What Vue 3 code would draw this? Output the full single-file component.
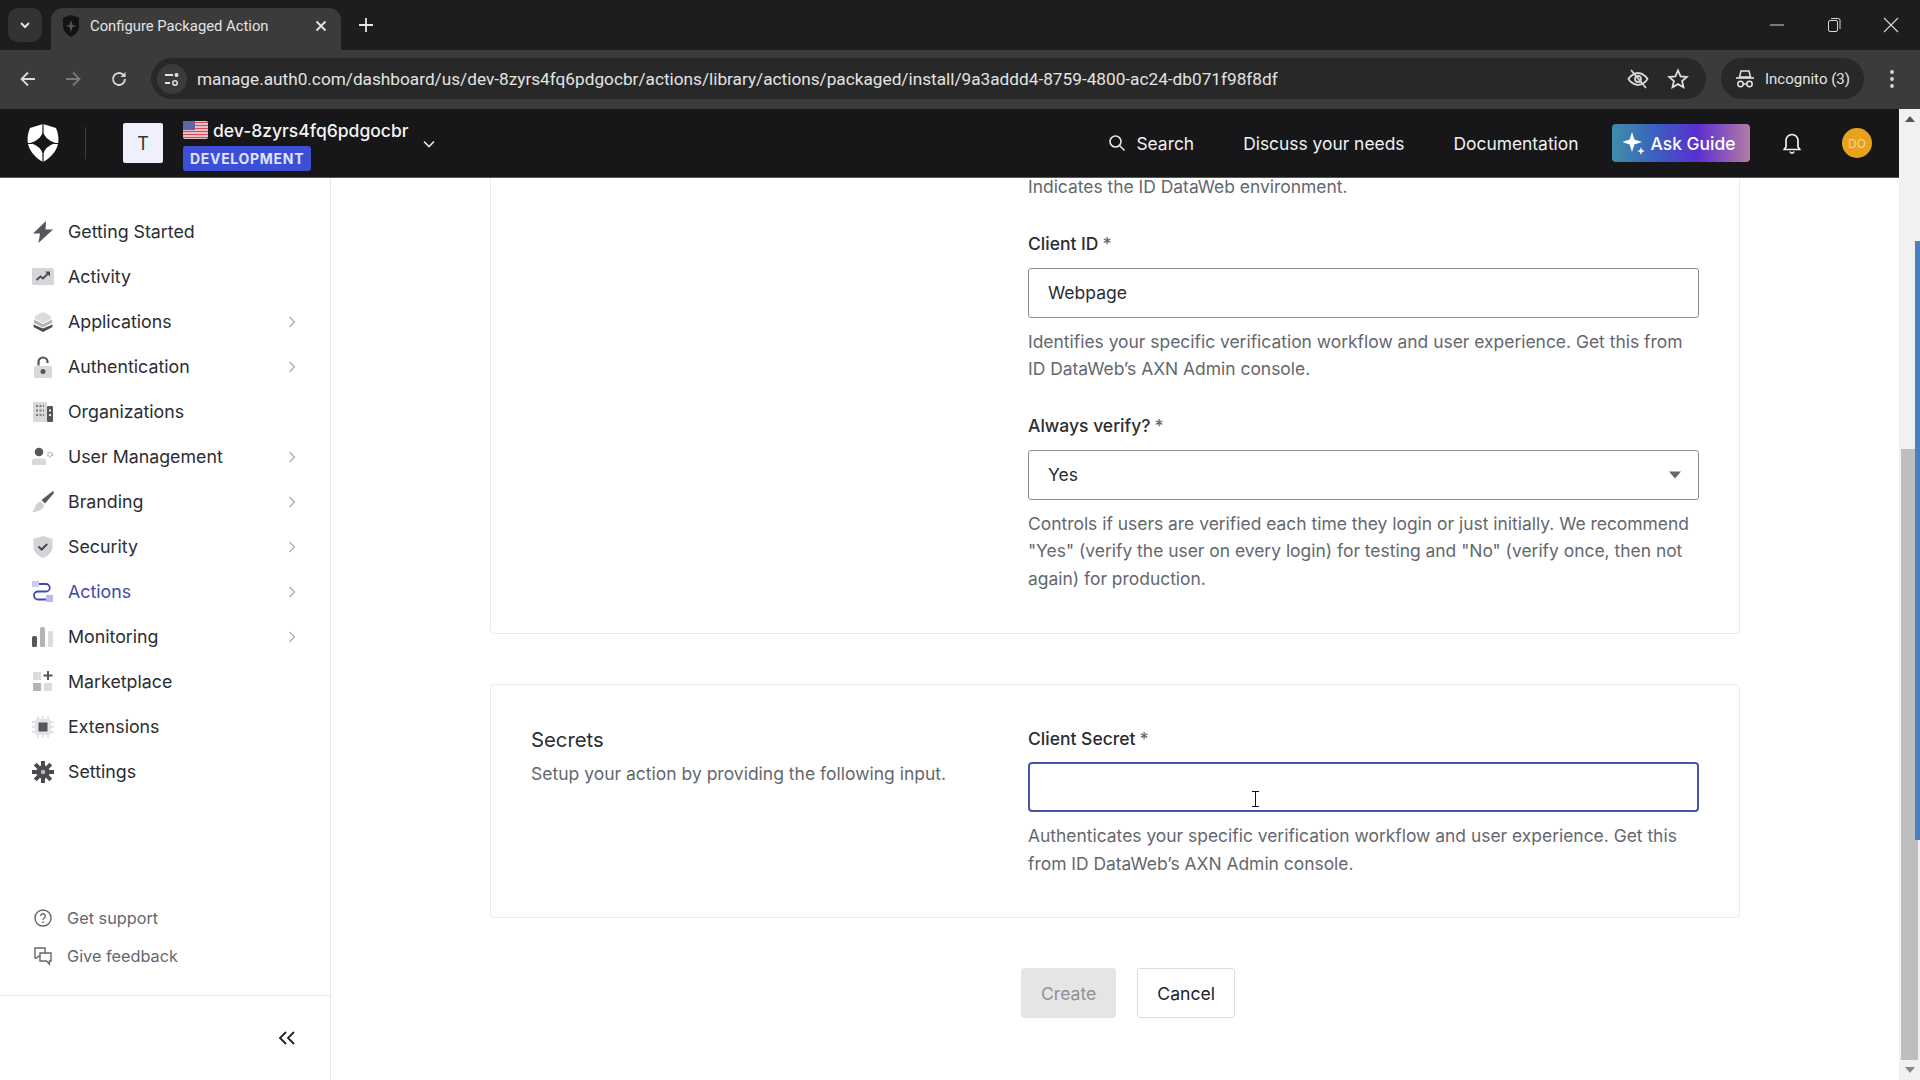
<template>
  <div class="screen">
    <div class="tabstrip">
      <button class="tab-search">
        <svg width="14" height="14" viewBox="0 0 14 14"><path d="M3 5l4 4 4-4" fill="none" stroke="#e3e3e3" stroke-width="2"/></svg>
      </button>
      <div class="tab">
        <svg class="favicon" width="20" height="24" viewBox="0 0 20 24"><path d="M10 1L2 3.500V12c0 5 3.500 8.500 8 11 4.500-2.500 8-6 8-11V3.500z" fill="#131315"/><path d="M10 6l1.500 5 4 1-4 1-1.500 5-1.500-5-4-1 4-1z" fill="#555"/></svg>
        <span class="tab-title">Configure Packaged Action</span>
        <svg class="tab-close" width="14" height="14" viewBox="0 0 14 14"><path d="M2.500 2.500l9 9m0-9l-9 9" stroke="#e6e6e6" stroke-width="1.800"/></svg>
      </div>
      <svg class="new-tab" width="18" height="18" viewBox="0 0 18 18"><path d="M9 2v14M2 9h14" stroke="#e6e6e6" stroke-width="1.800"/></svg>
      <div class="win-controls">
        <svg width="16" height="16" viewBox="0 0 16 16"><path d="M1 8h14" stroke="#d8d8d8" stroke-width="1"/></svg>
        <svg width="16" height="18" viewBox="0 0 16 18"><rect x="2.500" y="4.500" width="9" height="11" rx="1.500" fill="none" stroke="#d8d8d8"/><path d="M5 2.500h7.500a1.500 1.500 0 0 1 1.500 1.500v9" fill="none" stroke="#d8d8d8"/></svg>
        <svg width="16" height="16" viewBox="0 0 16 16"><path d="M1 1l14 14m0-14L1 15" stroke="#d8d8d8" stroke-width="1.100"/></svg>
      </div>
    </div>

    <div class="toolbar">
      <svg class="tb-icon" width="20" height="20" viewBox="0 0 20 20"><path d="M17 10H4m6-6.500L3.500 10l6.500 6.500" fill="none" stroke="#d9d9d9" stroke-width="1.800"/></svg>
      <svg class="tb-icon fwd" width="20" height="20" viewBox="0 0 20 20"><path d="M3 10h13m-6-6.500l6.500 6.500-6.500 6.500" fill="none" stroke="#7a7a7a" stroke-width="1.800"/></svg>
      <svg class="tb-icon reload" width="20" height="20" viewBox="0 0 20 20"><path d="M16 10a6 6 0 1 1-1.800-4.300L16 7.500" fill="none" stroke="#d9d9d9" stroke-width="1.800"/><path d="M16.500 3v5h-5z" fill="#d9d9d9"/></svg>
      <div class="urlbar">
        <span class="site-btn">
          <svg width="18" height="18" viewBox="0 0 18 18"><path d="M2 5h8M2 13h5" stroke="#e3e3e3" stroke-width="1.800"/><circle cx="13.500" cy="5" r="2" fill="#e3e3e3"/><circle cx="12" cy="13" r="2.200" fill="none" stroke="#e3e3e3" stroke-width="1.500"/></svg>
        </span>
        <span class="url">manage.auth0.com/dashboard/us/dev-8zyrs4fq6pdgocbr/actions/library/actions/packaged/install/9a3addd4-8759-4800-ac24-db071f98f8df</span>
        <svg class="url-eye" width="24" height="22" viewBox="0 0 24 22"><path d="M2.500 11S6 5 12 5s9.500 6 9.500 6-3.500 6-9.500 6-9.500-6-9.500-6z" fill="none" stroke="#d6d6d6" stroke-width="1.800"/><circle cx="12" cy="11" r="3" fill="none" stroke="#d6d6d6" stroke-width="1.800"/><path d="M5 2l15 18" stroke="#d6d6d6" stroke-width="1.800"/></svg>
        <svg class="url-star" width="22" height="22" viewBox="0 0 22 22"><path d="M11 2.500l2.600 5.800 6.200.6-4.700 4.200 1.400 6.200L11 16.100l-5.500 3.200 1.400-6.200-4.700-4.200 6.200-.6z" fill="none" stroke="#e0e0e0" stroke-width="1.800"/></svg>
      </div>
      <div class="incognito">
        <svg width="20" height="20" viewBox="0 0 20 20"><path d="M6 2h8l1.500 6h-11z" fill="none" stroke="#e3e3e3" stroke-width="1.500"/><path d="M1 9h18" stroke="#e3e3e3" stroke-width="1.600"/><circle cx="5.500" cy="15" r="2.700" fill="none" stroke="#e3e3e3" stroke-width="1.500"/><circle cx="14.500" cy="15" r="2.700" fill="none" stroke="#e3e3e3" stroke-width="1.500"/><path d="M8 15h4" stroke="#e3e3e3" stroke-width="1.500"/></svg>
        <span>Incognito (3)</span>
      </div>
      <svg class="tb-menu" width="6" height="22" viewBox="0 0 6 22"><circle cx="3" cy="4" r="1.900" fill="#d9d9d9"/><circle cx="3" cy="11" r="1.900" fill="#d9d9d9"/><circle cx="3" cy="18" r="1.900" fill="#d9d9d9"/></svg>
    </div>

    <div class="page">
      <div class="page-main">
        <header class="topbar">
          <svg class="logo" width="32" height="38" viewBox="0 0 32 38">
            <path d="M16 0L29 4c2.500 6 3 11 2 16-2 8-8 14-15 18C9 34 3 28 1 20 0 15 .5 10 3 4z" fill="#fff"/>
            <path d="M16 7q1.500 8.500 12.500 12Q17.500 22.500 16 31q-1.500-8.500-12.500-12Q14.500 15.500 16 7z" fill="#17171a"/>
            <path d="M16 0v8M16 30v8M0 19.500h5M27 19.500h5" stroke="#17171a" stroke-width="1.200"/>
          </svg>
          <span class="logo-sep"></span>
          <span class="tenant-tile">T</span>
          <div class="tenant">
            <div class="tenant-name">
              <svg width="25" height="18" viewBox="0 0 25 18"><rect width="25" height="18" rx="2" fill="#e8e8ee"/><path d="M0 1.500h25M0 4.500h25M0 7.500h25M0 10.500h25M0 13.500h25M0 16.500h25" stroke="#d9474f" stroke-width="1.500"/><rect width="12" height="9" fill="#5d64a8"/></svg>
              <span>dev-8zyrs4fq6pdgocbr</span>
            </div>
            <span class="env-badge">DEVELOPMENT</span>
          </div>
          <svg class="tenant-chevron" width="14" height="10" viewBox="0 0 14 10"><path d="M2 2.500l5 5 5-5" fill="none" stroke="#e6e6e6" stroke-width="1.600"/></svg>

          <div class="top-links">
            <span class="top-link search">
              <svg width="18" height="18" viewBox="0 0 18 18"><circle cx="7.500" cy="7.500" r="5.500" fill="none" stroke="#e8e8e8" stroke-width="1.600"/><path d="M11.500 11.500l5 5" stroke="#e8e8e8" stroke-width="1.600"/></svg>
              Search
            </span>
            <span class="top-link">Discuss your needs</span>
            <span class="top-link">Documentation</span>
            <button class="ask-guide">
              <svg width="22" height="24" viewBox="0 0 22 24"><path d="M9 1l2.400 7.600L19 11l-7.600 2.400L9 21l-2.400-7.600L-1 11l7.600-2.400z" fill="#fff"/><path d="M18 16l1 3 3 1-3 1-1 3-1-3-3-1 3-1z" fill="#fff"/></svg>
              Ask Guide
            </button>
            <svg class="bell" width="20" height="24" viewBox="0 0 20 24"><path d="M4 16V9.500a6 6 0 0 1 12 0V16l2 2.500H2z" fill="none" stroke="#f2f2f2" stroke-width="1.700" stroke-linejoin="round"/><path d="M7.800 20.500a2.300 2.300 0 0 0 4.400 0" fill="none" stroke="#f2f2f2" stroke-width="1.500"/></svg>
            <span class="avatar">DO</span>
          </div>
        </header>

        <div class="body">
          <aside class="sidebar">
            <nav class="nav">
              <div v-for="item in navItems" :key="item.label" class="nav-item" :class="{ active: item.active }">
                <svg class="nav-icon" width="22" height="22" viewBox="0 0 22 22" v-html="item.icon"></svg>
                <span class="nav-label">{{ item.label }}</span>
                <svg v-if="item.arrow" class="nav-arrow" width="8" height="12" viewBox="0 0 8 12"><path d="M1.500 1l5 5-5 5" fill="none" stroke="#a9a9ae" stroke-width="1.200"/></svg>
              </div>
            </nav>
            <div class="side-foot">
              <div class="foot-item">
                <svg width="20" height="20" viewBox="0 0 20 20"><circle cx="10" cy="10" r="8" fill="none" stroke="#65676e" stroke-width="1.400"/><path d="M7.700 8a2.300 2.300 0 1 1 3.500 2c-.8.500-1.200 1-1.200 1.800" fill="none" stroke="#65676e" stroke-width="1.400"/><circle cx="10" cy="14.200" r=".9" fill="#65676e"/></svg>
                Get support
              </div>
              <div class="foot-item">
                <svg width="20" height="20" viewBox="0 0 20 20"><path d="M2 2h10v8H6l-2.500 2H2z" fill="none" stroke="#65676e" stroke-width="1.400"/><path d="M7 7h11v8h-1.500v3l-3-3H7z" fill="#fff" stroke="#65676e" stroke-width="1.400"/></svg>
                Give feedback
              </div>
            </div>
            <div class="side-collapse">
              <svg width="18" height="14" viewBox="0 0 18 14"><path d="M8 1L2 7l6 6M16 1l-6 6 6 6" fill="none" stroke="#1e212a" stroke-width="1.800"/></svg>
            </div>
          </aside>

          <main class="content">
            <section class="card first">
              <div class="card-side"></div>
              <div class="card-fields">
                <p class="help env-help">Indicates the ID DataWeb environment.</p>
                <label class="field-label">Client ID<span class="req">*</span></label>
                <div class="input">Webpage</div>
                <p class="help">Identifies your specific verification workflow and user experience. Get this from ID DataWeb’s AXN Admin console.</p>
                <label class="field-label">Always verify?<span class="req">*</span></label>
                <div class="input select">
                  Yes
                  <svg width="12" height="8" viewBox="0 0 12 8"><path d="M0 .5h12L6 7.500z" fill="#65676e"/></svg>
                </div>
                <p class="help">Controls if users are verified each time they login or just initially. We recommend "Yes" (verify the user on every login) for testing and "No" (verify once, then not again) for production.</p>
              </div>
            </section>

            <section class="card secrets">
              <div class="card-side">
                <h3>Secrets</h3>
                <p>Setup your action by providing the following input.</p>
              </div>
              <div class="card-fields">
                <label class="field-label">Client Secret<span class="req">*</span></label>
                <div class="input focused">
                  <svg class="ibeam" width="9" height="16" viewBox="0 0 9 16"><path d="M1 .5h7M1 15.500h7M4.500 .5v15" stroke="#111" stroke-width="1" fill="none"/></svg>
                </div>
                <p class="help">Authenticates your specific verification workflow and user experience. Get this from ID DataWeb’s AXN Admin console.</p>
              </div>
            </section>

            <div class="actions">
              <button class="btn disabled">Create</button>
              <button class="btn">Cancel</button>
            </div>
          </main>
        </div>
      </div>

      <div class="scrollbar">
        <svg class="sb-arrow" width="12" height="8" viewBox="0 0 12 8"><path d="M1 7l5-6 5 6z" fill="#555"/></svg>
        <div class="sb-track"><div class="sb-thumb"></div></div>
        <svg class="sb-arrow" width="12" height="8" viewBox="0 0 12 8"><path d="M1 1l5 6 5-6z" fill="#888"/></svg>
        <div class="sb-strip"></div>
      </div>
    </div>
  </div>
</template>

<script setup>
const navItems = [
  { label: 'Getting Started', icon: '<path d="M14 0L1 12.500h7L6.500 22 21 8.500h-7.500z" fill="#55575c"/>' },
  { label: 'Activity', icon: '<rect y="2" width="22" height="17" rx="1.500" fill="#d6d6d9"/><path d="M4.500 14l4-3.500 2.500 2 5-5" fill="none" stroke="#4a4c51" stroke-width="1.800"/><path d="M13 5.500h5v5z" fill="#4a4c51"/>' },
  { label: 'Applications', arrow: true, icon: '<path d="M11 1l8 4v3l-8 4-8-4V5z" fill="#dcdcdf"/><path d="M2 8.500l9 4.500 9-4.500V12l-9 4.500L2 12z" fill="#b3b4b8"/><path d="M1.500 13.500l9.500 4 9.500-4V16L11 21 1.500 16z" fill="#4a4c51"/>' },
  { label: 'Authentication', arrow: true, icon: '<path d="M6.500 9.500V6a4.500 4.500 0 0 1 9 0v1" fill="none" stroke="#55575c" stroke-width="2.200"/><rect x="2" y="10" width="18" height="12" rx="1.500" fill="#d9d9dc"/><circle cx="11" cy="15.500" r="2.500" fill="#55575c"/>' },
  { label: 'Organizations', icon: '<rect x="1" y="1" width="14" height="20" rx="1" fill="#d9d9dc"/><rect x="15" y="5" width="6" height="16" rx="1" fill="#55575c"/><path d="M4 5h8M4 9.500h8M4 14h8" stroke="#7a7b80" stroke-width="2" stroke-dasharray="2 1.500"/><path d="M17 9.500h2M17 14h2" stroke="#eee" stroke-width="1.800"/>' },
  { label: 'User Management', arrow: true, icon: '<circle cx="7" cy="6" r="4.300" fill="#55575c"/><path d="M0 15.500a3 3 0 0 1 3-3h8a3 3 0 0 1 3 3V19H0z" fill="#d9d9dc"/><circle cx="18" cy="8.500" r="2.200" fill="none" stroke="#b3b4b8" stroke-width="1.800" stroke-dasharray="1.500 .8"/>' },
  { label: 'Branding', arrow: true, icon: '<path d="M21 0L9.500 9l3.500 3.500L22 2z" fill="#55575c"/><path d="M8.500 10.500l3.500 3.500c-1 5-6 7-12 7 3-1.500 2-8 8.500-10.500z" fill="#cfd0d3"/>' },
  { label: 'Security', arrow: true, icon: '<path d="M11 0l9.500 3v8c0 5-4.500 9-9.500 11C6 20 1.500 16 1.500 11V3z" fill="#d3d4d7"/><path d="M6.500 10.500l3.200 3 5.500-5.500" fill="none" stroke="#4a4c51" stroke-width="2.200"/>' },
  { label: 'Actions', active: true, arrow: true, icon: '<rect x="0" y="0" width="7" height="6" fill="#c9cdf0"/><rect x="14" y="14" width="7" height="7" fill="#b5bbee"/><path d="M7 3h7a3.700 3.700 0 0 1 0 7.500H6a4 4 0 0 0 0 8h8" fill="none" stroke="#3f4ba8" stroke-width="1.800"/>' },
  { label: 'Monitoring', arrow: true, icon: '<rect y="10" width="5" height="11" rx="1.500" fill="#55575c"/><rect x="8" y="1" width="5" height="20" rx="1.500" fill="#b3b4b8"/><rect x="16" y="5" width="5" height="16" rx="1.500" fill="#dcdcdf"/>' },
  { label: 'Marketplace', icon: '<rect x="1" y="1" width="8" height="8" fill="#dcdcdf"/><rect x="1" y="12" width="8" height="8" fill="#b3b4b8"/><rect x="12" y="12" width="8" height="8" fill="#dcdcdf"/><path d="M16 0v9M11.500 4.500h9" stroke="#55575c" stroke-width="2"/>' },
  { label: 'Extensions', icon: '<path d="M6 0v22M11 0v22M16 0v22M0 6h22M0 11h22M0 16h22" stroke="#d9d9dc" stroke-width="1.300"/><rect x="3" y="3" width="16" height="16" rx="2" fill="#e3e3e6"/><rect x="6.500" y="6.500" width="9" height="9" fill="#55575c"/>' },
  { label: 'Settings', icon: '<path d="M11 6.500a4.500 4.500 0 1 0 0 9 4.500 4.500 0 0 0 0-9z" fill="#b8b8bb" stroke="#4a4c51" stroke-width="4.500"/><path d="M11 0v5M11 17v5M0 11h5M17 11h5M3.200 3.200l3.500 3.500M15.300 15.300l3.500 3.500M18.800 3.200l-3.500 3.500M6.700 15.300l-3.500 3.500" stroke="#4a4c51" stroke-width="4"/>' }
];
</script>

<style>
html, body { margin: 0; overflow: hidden; background: #fff; }
</style>

<style scoped>
.screen {
  width: 1920px;
  height: 1080px;
  display: flex;
  flex-direction: column;
  font-family: Inter, "Liberation Sans", sans-serif;
  overflow: hidden;
}

/* browser chrome */
.tabstrip {
  height: 50px;
  flex: none;
  background: #1d1d1d;
  display: flex;
  align-items: flex-end;
  padding-left: 8px;
  font-family: Roboto, "Liberation Sans", sans-serif;
}
.tab-search {
  width: 34px;
  height: 34px;
  margin-bottom: 8px;
  margin-right: 9px;
  background: #333;
  border: 0;
  border-radius: 10px;
  padding: 0;
  display: flex;
  align-items: center;
  justify-content: center;
}
.tab {
  width: 290px;
  height: 42px;
  background: #3b3b3b;
  border-radius: 12px 12px 0 0;
  display: flex;
  align-items: center;
  padding: 0 13px 7px 10px;
  box-sizing: border-box;
}
.favicon { margin-right: 9px; }
.tab-title { color: #e3e3e3; font-size: 14.800px; flex: 1; white-space: nowrap; }
.new-tab { margin: 0 0 16px 16px; }
.win-controls {
  margin-left: auto;
  display: flex;
  align-items: center;
  height: 50px;
  gap: 41px;
  padding-right: 21px;
}
.toolbar {
  height: 59px;
  flex: none;
  background: #3b3b3b;
  display: flex;
  align-items: center;
  padding: 0 0 2px 18px;
  box-sizing: border-box;
  font-family: Roboto, "Liberation Sans", sans-serif;
}
.tb-icon { flex: none; }
.fwd { margin-left: 25px; }
.reload { margin-left: 26px; }
.urlbar {
  width: 1555px;
  height: 41px;
  margin-left: 22px;
  background: #282828;
  border-radius: 21px;
  display: flex;
  align-items: center;
  box-sizing: border-box;
  padding: 0 17px 0 6px;
}
.site-btn {
  width: 30px;
  height: 30px;
  border-radius: 50%;
  background: #3b3b3b;
  display: flex;
  align-items: center;
  justify-content: center;
  flex: none;
}
.url { color: #e3e3e3; font-size: 17.230px; margin-left: 10px; white-space: nowrap; flex: 1; }
.url-star { margin-left: 17px; }
.incognito {
  width: 143px;
  height: 41px;
  margin-left: 15px;
  background: #282828;
  border-radius: 21px;
  display: flex;
  align-items: center;
  gap: 10px;
  padding-left: 14px;
  box-sizing: border-box;
  color: #e3e3e3;
  font-size: 15px;
}
.tb-menu { margin-left: 25px; }

.page { flex: 1; display: flex; min-height: 0; }
.page-main { flex: 1; display: flex; flex-direction: column; min-width: 0; }

/* app header */
.topbar {
  height: 69px;
  flex: none;
  background: #17171a;
  display: flex;
  align-items: center;
  padding-left: 27px;
  color: #f0f0f0;
  border-bottom: 1px solid #55555a;
  box-sizing: border-box;
}
.logo-sep { width: 1px; height: 32px; background: #3d3d40; margin-left: 26px; }
.tenant-tile {
  width: 40px;
  height: 40px;
  margin-left: 37px;
  background: #eff0fa;
  border-radius: 2px;
  color: #33353c;
  display: flex;
  align-items: center;
  justify-content: center;
  font-size: 18px;
}
.tenant { margin: 4px 0 0 20px; display: flex; flex-direction: column; gap: 5px; align-items: flex-start; }
.tenant-name { display: flex; align-items: center; gap: 5px; font-size: 17.500px; font-weight: 500; color: #f4f4f4; }
.env-badge {
  background: #3d4fd6;
  color: #dfe3ff;
  font-size: 14px;
  font-weight: 700;
  letter-spacing: .7px;
  border-radius: 3px;
  padding: 4px 7px;
  line-height: 17px;
}
.tenant-chevron { margin-left: 13px; margin-top: 2px; }
.top-links { margin-left: auto; display: flex; align-items: center; padding-right: 27px; }
.top-link { font-size: 17.400px; color: #f0f0f0; margin-right: 49px; white-space: nowrap; }
.search { display: flex; align-items: center; gap: 10px; }
.ask-guide {
  width: 138px;
  height: 38px;
  border: 0;
  border-radius: 4px;
  background: linear-gradient(90deg, #3f8fa8 0%, #3b5fc0 32%, #5b2fd0 62%, #b47ca6 100%);
  color: #fff;
  font: 500 17.400px Inter, sans-serif;
  display: flex;
  align-items: center;
  justify-content: center;
  gap: 6px;
  padding: 0 4px 0 0;
  margin-left: -15.500px;
}
.bell { margin-left: 32px; }
.avatar {
  width: 30px;
  height: 30px;
  margin-left: 40px;
  background: #e9a11e;
  border-radius: 50%;
  color: #f5d79a;
  font-size: 12px;
  display: flex;
  align-items: center;
  justify-content: center;
}

.body { flex: 1; display: flex; min-height: 0; }

/* sidebar */
.sidebar {
  width: 331px;
  flex: none;
  box-sizing: border-box;
  border-right: 1px solid #e6e6e8;
  display: flex;
  flex-direction: column;
}
.nav { padding: 31px 0 0 32px; }
.nav-item {
  height: 45px;
  display: flex;
  align-items: center;
  color: #2b2d33;
  font-size: 17.800px;
}
.nav-item.active { color: #3f4ba8; }
.nav-icon { flex: none; }
.nav-label { margin-left: 14px; }
.nav-arrow { margin-left: auto; margin-right: 34px; }
.side-foot { margin-top: auto; padding: 0 0 20px 33px; border-bottom: 1px solid #e6e6e8; }
.foot-item {
  height: 38px;
  display: flex;
  align-items: center;
  gap: 14px;
  color: #65676e;
  font-size: 16.300px;
}
.side-collapse { height: 84px; flex: none; display: flex; align-items: center; justify-content: flex-end; padding-right: 34px; box-sizing: border-box; }

/* form */
.content { flex: 1; min-width: 0; overflow: hidden; padding: 0 159px 0 159px; box-sizing: border-box; }
.card {
  border: 1px solid #ebebed;
  border-radius: 4px;
  display: grid;
  grid-template-columns: 497px 1fr;
  padding: 0 40px;
  box-sizing: border-box;
}
.card.first { margin-top: -30px; height: 486px; border-top: 0; padding-top: 25px; }
.card.secrets { margin-top: 50px; height: 234px; padding-top: 42px; }
.card-side h3 { margin: 0; font-size: 20.300px; font-weight: 400; color: #2b2d33; line-height: 26px; }
.card-side p { margin: 9px 0 0; font-size: 17.500px; color: #65676e; line-height: 24px; white-space: nowrap; }
.field-label { display: block; font-size: 17.500px; font-weight: 500; color: #2b2d33; line-height: 24px; }
.req { color: #65676e; margin-left: 4px; }
.input {
  height: 50px;
  margin-top: 11px;
  border: 1px solid #8b8d93;
  border-radius: 3px;
  box-sizing: border-box;
  display: flex;
  align-items: center;
  padding: 0 19px;
  font-size: 17.500px;
  color: #2b2d33;
  position: relative;
}
.select { justify-content: space-between; padding-right: 17px; }
.focused { border: 2px solid #4655a5; border-radius: 4px; }
.ibeam { position: absolute; left: 221px; top: 27px; }
.help { margin: 11px 0 0; font-size: 17.430px; line-height: 27.500px; color: #65676e; }
.help + .field-label { margin-top: 31px; }
.first .input { margin-top: 12px; }
.first .help, .secrets .help { margin-top: 10px; }
.first .env-help { margin-top: 0; }

.actions { display: flex; justify-content: center; gap: 21px; margin-top: 50px; padding-left: 26px; }
.btn {
  height: 50px;
  padding: 0 19px;
  background: #fff;
  border: 1px solid #dcdcde;
  border-radius: 3px;
  color: #1e212a;
  font: 400 17.600px Inter, sans-serif;
}
.btn.disabled { background: #e5e5e6; border-color: #e5e5e6; color: #8f9095; }

/* scrollbar */
.scrollbar {
  width: 21px;
  flex: none;
  background: #f1f1f1;
  display: flex;
  flex-direction: column;
  align-items: center;
  position: relative;
}
.sb-arrow { flex: none; margin: 6px 0; }
.sb-track { flex: 1; width: 100%; padding-top: 320px; box-sizing: border-box; }
.sb-thumb { height: 100%; width: 17px; margin-left: 2px; background: #bebebe; }
.sb-strip { position: absolute; right: 0; top: 132px; width: 5px; height: 599px; background: #4a7fc4; }
</style>
